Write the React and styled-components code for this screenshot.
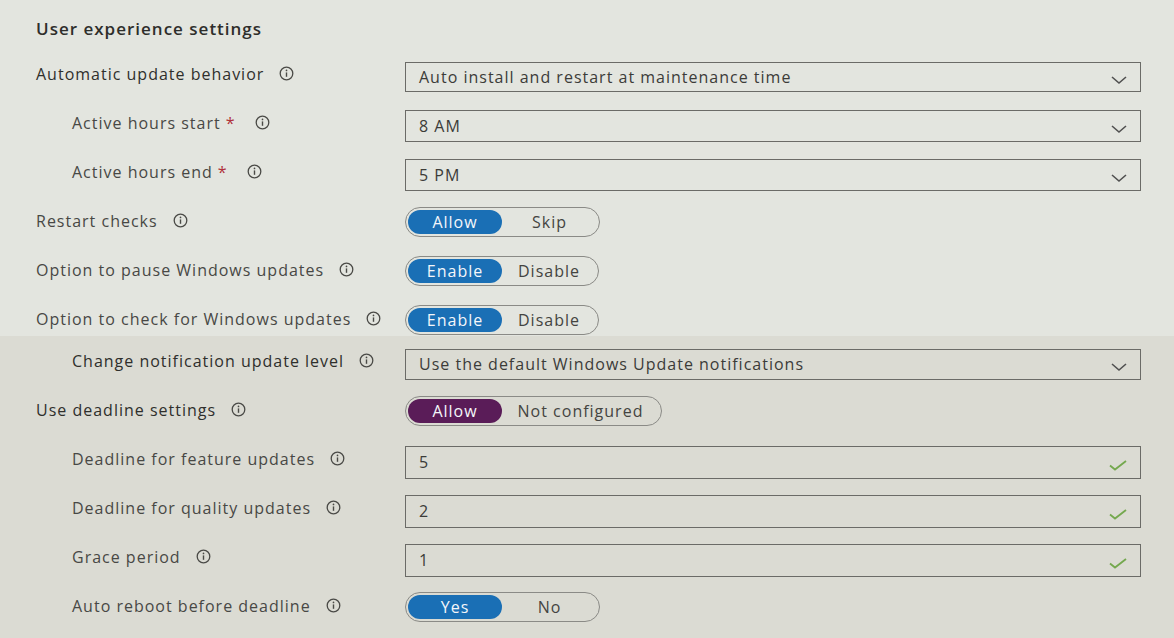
import React from "react";
import styled, { createGlobalStyle } from "styled-components";

const Global = createGlobalStyle`
  html, body { margin: 0; padding: 0; }
  body {
    background: #dbdbd3;
    font-family: "Open Sans", "Noto Sans", sans-serif;
    color: #3b3b38;
  }
`;

const Page = styled.div`
  width: 1174px;
  height: 638px;
  overflow: hidden;
  background: #dbdbd3;
`;

const Panel = styled.section`
  height: ${(p) => p.$height}px;
  overflow: hidden;
  background: ${(p) => p.$bg};
  padding: ${(p) => p.$top}px 33px 0 36px;
  box-sizing: border-box;
`;

const Title = styled.h2`
  margin: 0;
  height: 39px;
  padding-top: 7px;
  box-sizing: border-box;
  font-size: 17px;
  font-weight: 600;
  color: #2e2e2b;
  letter-spacing: 1px;
`;

const Row = styled.div`
  display: grid;
  grid-template-columns: 369px 736px;
  align-items: center;
  height: 49px;
`;

const Label = styled.div`
  display: flex;
  align-items: center;
  padding-left: ${(p) => (p.$indent ? 36 : 0)}px;
  font-size: 16px;
  letter-spacing: 1px;
  color: ${(p) => (p.$strong ? "#2f2f2c" : "#484845")};
  white-space: nowrap;
`;

const Star = styled.span`
  color: #b0303a;
  margin-left: 5px;
`;

const InfoWrap = styled.span`
  display: inline-flex;
  margin-left: ${(p) => p.$gap ?? 15}px;
`;

const Info = ({ gap }) => (
  <InfoWrap $gap={gap}>
    <svg width="15" height="15" viewBox="0 0 15 15">
      <circle cx="7.5" cy="7.5" r="6.3" fill="none" stroke="#4a4a46" strokeWidth="1.3" />
      <line x1="7.5" y1="6.4" x2="7.5" y2="10.8" stroke="#4a4a46" strokeWidth="1.4" />
      <circle cx="7.5" cy="4.4" r="0.85" fill="#4a4a46" />
    </svg>
  </InfoWrap>
);

const Box = styled.div`
  height: ${(p) => p.$h || 31}px;
  margin-top: 7px;
  border: 1.5px solid #6b6b67;
  box-sizing: border-box;
  display: flex;
  align-items: center;
  justify-content: space-between;
  padding: 0 12px 0 13px;
  font-size: 16px;
  letter-spacing: 1px;
  color: #3c3c39;
  width: 100%;
`;

const Icon = styled.span`
  display: inline-flex;
  padding-top: 5px;
`;

const Chevron = () => (
  <Icon>
    <svg width="18" height="10" viewBox="0 0 18 10">
      <polyline points="2,2 9,8 16,2" fill="none" stroke="#505050" strokeWidth="1.6" />
    </svg>
  </Icon>
);

const Check = () => (
  <Icon>
    <svg width="20" height="12" viewBox="0 0 20 12">
      <polyline points="2,6.5 7,10.5 18,2" fill="none" stroke="#74a84e" strokeWidth="1.8" />
    </svg>
  </Icon>
);

const Toggle = styled.div`
  display: inline-flex;
  align-items: center;
  width: ${(p) => p.$w}px;
  height: 30px;
  margin-top: 3px;
  border: 1.5px solid #8a8a86;
  border-radius: 15px;
  box-sizing: border-box;
  padding: 2px;
  justify-self: start;
  font-size: 16px;
  letter-spacing: 1px;
`;

const Seg = styled.div`
  height: 100%;
  display: flex;
  align-items: center;
  justify-content: center;
  border-radius: 12px;
  width: ${(p) => (p.$on ? "94px" : "auto")};
  flex: ${(p) => (p.$on ? "none" : "1")};
  background: ${(p) => (p.$on ? p.$color : "transparent")};
  color: ${(p) => (p.$on ? "#f4f6fa" : "#444441")};
`;

const Switch = ({ on, off, w = 195, color = "#1a6fb5" }) => (
  <Toggle $w={w}>
    <Seg $on $color={color}>{on}</Seg>
    <Seg>{off}</Seg>
  </Toggle>
);

const Select = ({ value, h }) => (
  <Box $h={h}>
    <span>{value}</span>
    <Chevron />
  </Box>
);

const Input = ({ value }) => (
  <Box $h={33}>
    <span>{value}</span>
    <Check />
  </Box>
);

export default function App() {
  return (
    <Page>
      <Global />
      <Panel $height={336} $bg="#e3e5df" $top={10}>
        <Title>User experience settings</Title>
        <Row>
          <Label $strong>Automatic update behavior<Info /></Label>
          <Select value="Auto install and restart at maintenance time" h={30} />
        </Row>
        <Row>
          <Label $indent>Active hours start<Star>*</Star><Info gap={19} /></Label>
          <Select value="8 AM" h={32} />
        </Row>
        <Row>
          <Label $indent>Active hours end<Star>*</Star><Info gap={19} /></Label>
          <Select value="5 PM" h={32} />
        </Row>
        <Row>
          <Label>Restart checks<Info /></Label>
          <Switch on="Allow" off="Skip" />
        </Row>
        <Row>
          <Label>Option to pause Windows updates<Info /></Label>
          <Switch on="Enable" off="Disable" w={194} />
        </Row>
        <Row>
          <Label>Option to check for Windows updates<Info /></Label>
          <Switch on="Enable" off="Disable" w={194} />
        </Row>
      </Panel>
      <Panel $height={302} $bg="#dbdbd3" $top={0}>
        <Row>
          <Label $indent $strong>Change notification update level<Info /></Label>
          <Select value="Use the default Windows Update notifications" h={31} />
        </Row>
        <Row>
          <Label $strong>Use deadline settings<Info /></Label>
          <Switch on="Allow" off="Not configured" w={257} color="#5a1c58" />
        </Row>
        <Row>
          <Label $indent>Deadline for feature updates<Info /></Label>
          <Input value="5" />
        </Row>
        <Row>
          <Label $indent>Deadline for quality updates<Info /></Label>
          <Input value="2" />
        </Row>
        <Row>
          <Label $indent>Grace period<Info /></Label>
          <Input value="1" />
        </Row>
        <Row>
          <Label $indent>Auto reboot before deadline<Info /></Label>
          <Switch on="Yes" off="No" />
        </Row>
      </Panel>
    </Page>
  );
}
